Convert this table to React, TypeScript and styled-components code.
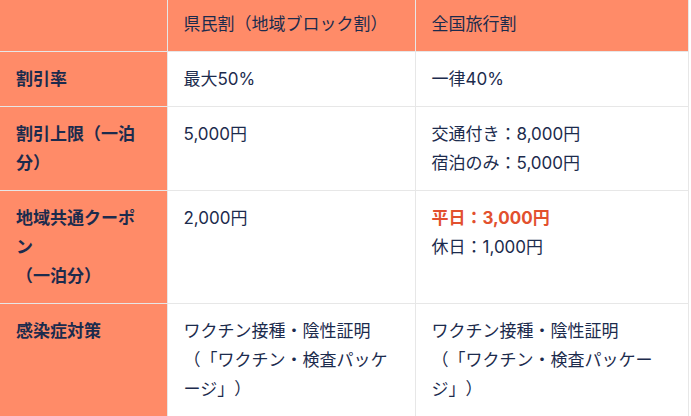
import styled, { createGlobalStyle } from 'styled-components';

const GlobalStyle = createGlobalStyle`
   body {
      margin: 0;
      background: #ffffff;
      font-family: 'Inter', 'Noto Sans CJK JP', sans-serif;
      color: #1c2b4d;
   }
`;

const colors = {
   accent: '#ff8b68',
   text: '#1c2b4d',
   border: '#e7e7e7',
   highlight: '#e2502e'
};

const Table = styled.table`
   border-collapse: collapse;
   table-layout: fixed;
   width: 688px;
   font-size: 17px;
   line-height: 29px;
   text-spacing-trim: space-all;
`;

const HeadCell = styled.th`
   background: ${colors.accent};
   border-right: 1px solid ${colors.border};
   border-bottom: 1px solid ${colors.border};
   padding: 10px 16px 12px;
   text-align: left;
   font-weight: 400;
   vertical-align: top;
`;

const RowLabel = styled.th`
   background: ${colors.accent};
   border-right: 1px solid ${colors.border};
   border-bottom: 1px solid ${colors.border};
   padding: 13px 16px 12px;
   text-align: left;
   font-weight: 700;
   vertical-align: top;
`;

const Cell = styled.td`
   border-right: 1px solid ${colors.border};
   border-bottom: 1px solid ${colors.border};
   padding: 13px 16px 12px;
   vertical-align: top;
`;

const Strong = styled.strong<{ $tone?: string }>`
   font-weight: 700;
   color: ${({ $tone }) => $tone ?? colors.text};
`;

type Row = {
   label: React.ReactNode;
   prefecture: React.ReactNode;
   national: React.ReactNode;
};

const measures = (
   <>
      ワクチン接種・陰性証明
      <br />
      （「ワクチン・検査パッケージ」）
   </>
);

const rows: Row[] = [
   { label: '割引率', prefecture: '最大50%', national: '一律40%' },
   {
      label: '割引上限（一泊分）',
      prefecture: '5,000円',
      national: (
         <>
            交通付き：8,000円
            <br />
            宿泊のみ：5,000円
         </>
      )
   },
   {
      label: (
         <>
            地域共通クーポン
            <br />
            （一泊分）
         </>
      ),
      prefecture: '2,000円',
      national: (
         <>
            <Strong $tone={colors.highlight}>平日：3,000円</Strong>
            <br />
            休日：1,000円
         </>
      )
   },
   { label: '感染症対策', prefecture: measures, national: measures }
];

const App = () => {
   return (
      <>
         <GlobalStyle />
         <Table>
            <colgroup>
               <col style={{ width: 167 }} />
               <col style={{ width: 248 }} />
               <col style={{ width: 273 }} />
            </colgroup>
            <thead>
               <tr>
                  <HeadCell />
                  <HeadCell>県民割（地域ブロック割）</HeadCell>
                  <HeadCell>全国旅行割</HeadCell>
               </tr>
            </thead>
            <tbody>
               {rows.map((row, i) => (
                  <tr key={i}>
                     <RowLabel>{row.label}</RowLabel>
                     <Cell>{row.prefecture}</Cell>
                     <Cell>{row.national}</Cell>
                  </tr>
               ))}
            </tbody>
         </Table>
      </>
   );
};

export default App;
